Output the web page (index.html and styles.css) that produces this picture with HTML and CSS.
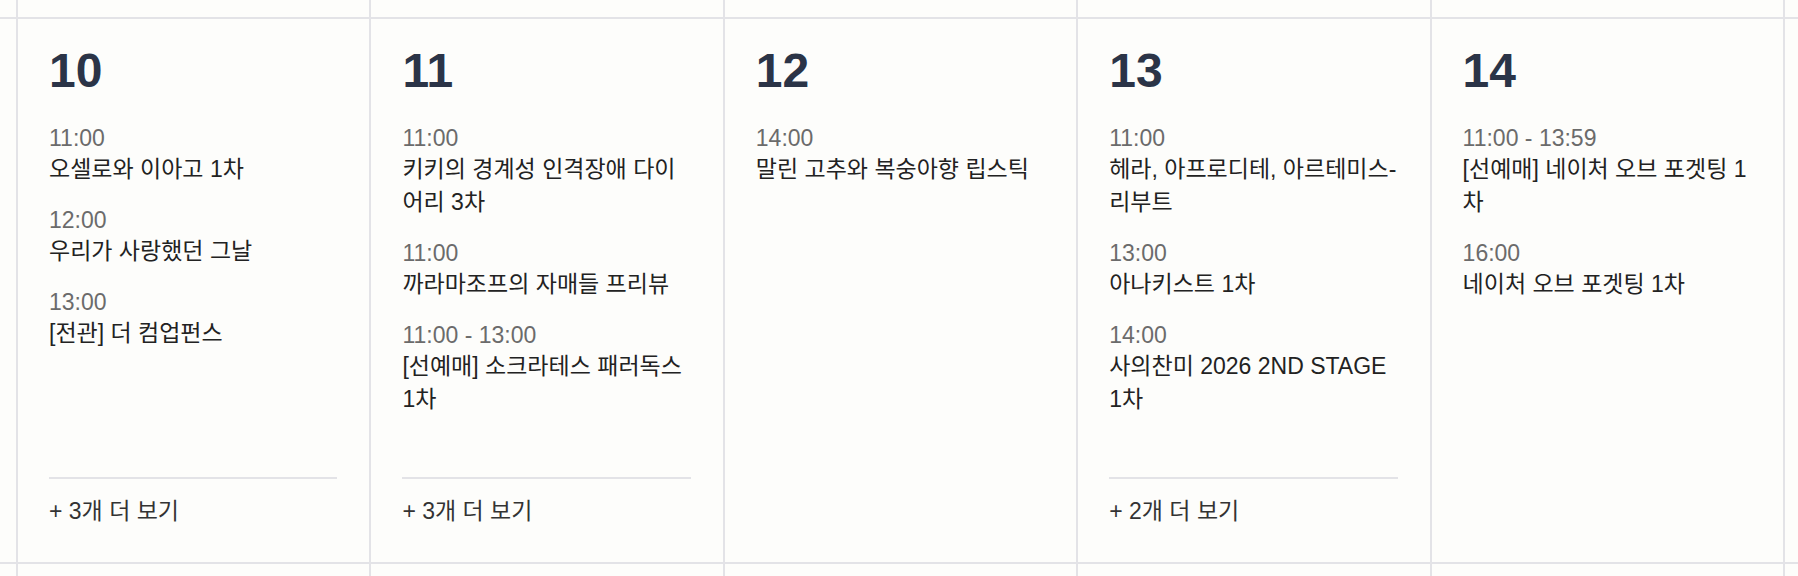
FILE: index.html
```html
<!DOCTYPE html>
<html lang="ko">
<head>
<meta charset="utf-8">
<title>공연 캘린더</title>
<link rel="stylesheet" href="styles.css">
</head>
<body>
<div class="calendar">
  <div class="cell"></div><div class="cell"></div><div class="cell"></div><div class="cell"></div><div class="cell"></div><div class="cell"></div><div class="cell"></div>

  <div class="cell"></div>

  <div class="cell day">
    <div class="date">10</div>
    <div class="events">
      <div class="event"><div class="time">11:00</div><div class="title">오셀로와 이아고 1차</div></div>
      <div class="event"><div class="time">12:00</div><div class="title">우리가 사랑했던 그날</div></div>
      <div class="event"><div class="time">13:00</div><div class="title">[전관] 더 컴업펀스</div></div>
    </div>
    <div class="more">+ 3개 더 보기</div>
  </div>

  <div class="cell day">
    <div class="date">11</div>
    <div class="events">
      <div class="event"><div class="time">11:00</div><div class="title">키키의 경계성 인격장애 다이어리 3차</div></div>
      <div class="event"><div class="time">11:00</div><div class="title">까라마조프의 자매들 프리뷰</div></div>
      <div class="event"><div class="time">11:00 - 13:00</div><div class="title">[선예매] 소크라테스 패러독스 1차</div></div>
    </div>
    <div class="more">+ 3개 더 보기</div>
  </div>

  <div class="cell day">
    <div class="date">12</div>
    <div class="events">
      <div class="event"><div class="time">14:00</div><div class="title">말린 고추와 복숭아향 립스틱</div></div>
    </div>
  </div>

  <div class="cell day">
    <div class="date">13</div>
    <div class="events">
      <div class="event"><div class="time">11:00</div><div class="title">헤라, 아프로디테, 아르테미스-리부트</div></div>
      <div class="event"><div class="time">13:00</div><div class="title">아나키스트 1차</div></div>
      <div class="event"><div class="time">14:00</div><div class="title">사의찬미 2026 2ND STAGE 1차</div></div>
    </div>
    <div class="more">+ 2개 더 보기</div>
  </div>

  <div class="cell day">
    <div class="date">14</div>
    <div class="events">
      <div class="event"><div class="time">11:00 - 13:59</div><div class="title">[선예매] 네이처 오브 포겟팅 1차</div></div>
      <div class="event"><div class="time">16:00</div><div class="title">네이처 오브 포겟팅 1차</div></div>
    </div>
  </div>

  <div class="cell"></div>

  <div class="cell"></div><div class="cell"></div><div class="cell"></div><div class="cell"></div><div class="cell"></div><div class="cell"></div><div class="cell"></div>
</div>
</body>
</html>
```

FILE: styles.css
```css
html, body {
  margin: 0;
  padding: 0;
}

body {
  background: #e3e3e7;
  font-family: "Liberation Sans", "Noto Sans CJK KR", sans-serif;
  overflow: hidden;
}

.calendar {
  display: grid;
  grid-template-columns: 16px repeat(5, 1fr) 13px;
  grid-template-rows: 17px 543px 12px;
  gap: 2px;
  height: 576px;
  background: #e3e3e7;
  overflow: hidden;
}

.cell {
  background: #fdfdfb;
  min-width: 0;
}

.day {
  display: flex;
  flex-direction: column;
  padding: 28px 32px 34px 31px;
}

.date {
  font-size: 48px;
  line-height: 48px;
  font-weight: 700;
  color: #2b3447;
  margin-bottom: 30px;
}

.events {
  display: flex;
  flex-direction: column;
  gap: 21px;
}

.time {
  font-size: 23px;
  line-height: 26px;
  color: #6b6b6b;
}

.title {
  margin-top: 2px;
  font-size: 23px;
  line-height: 33px;
  color: #222222;
}

.more {
  margin-top: auto;
  border-top: 2px solid #e3e3e7;
  padding-top: 16px;
  font-size: 23px;
  line-height: 33px;
  color: #333333;
}
```
